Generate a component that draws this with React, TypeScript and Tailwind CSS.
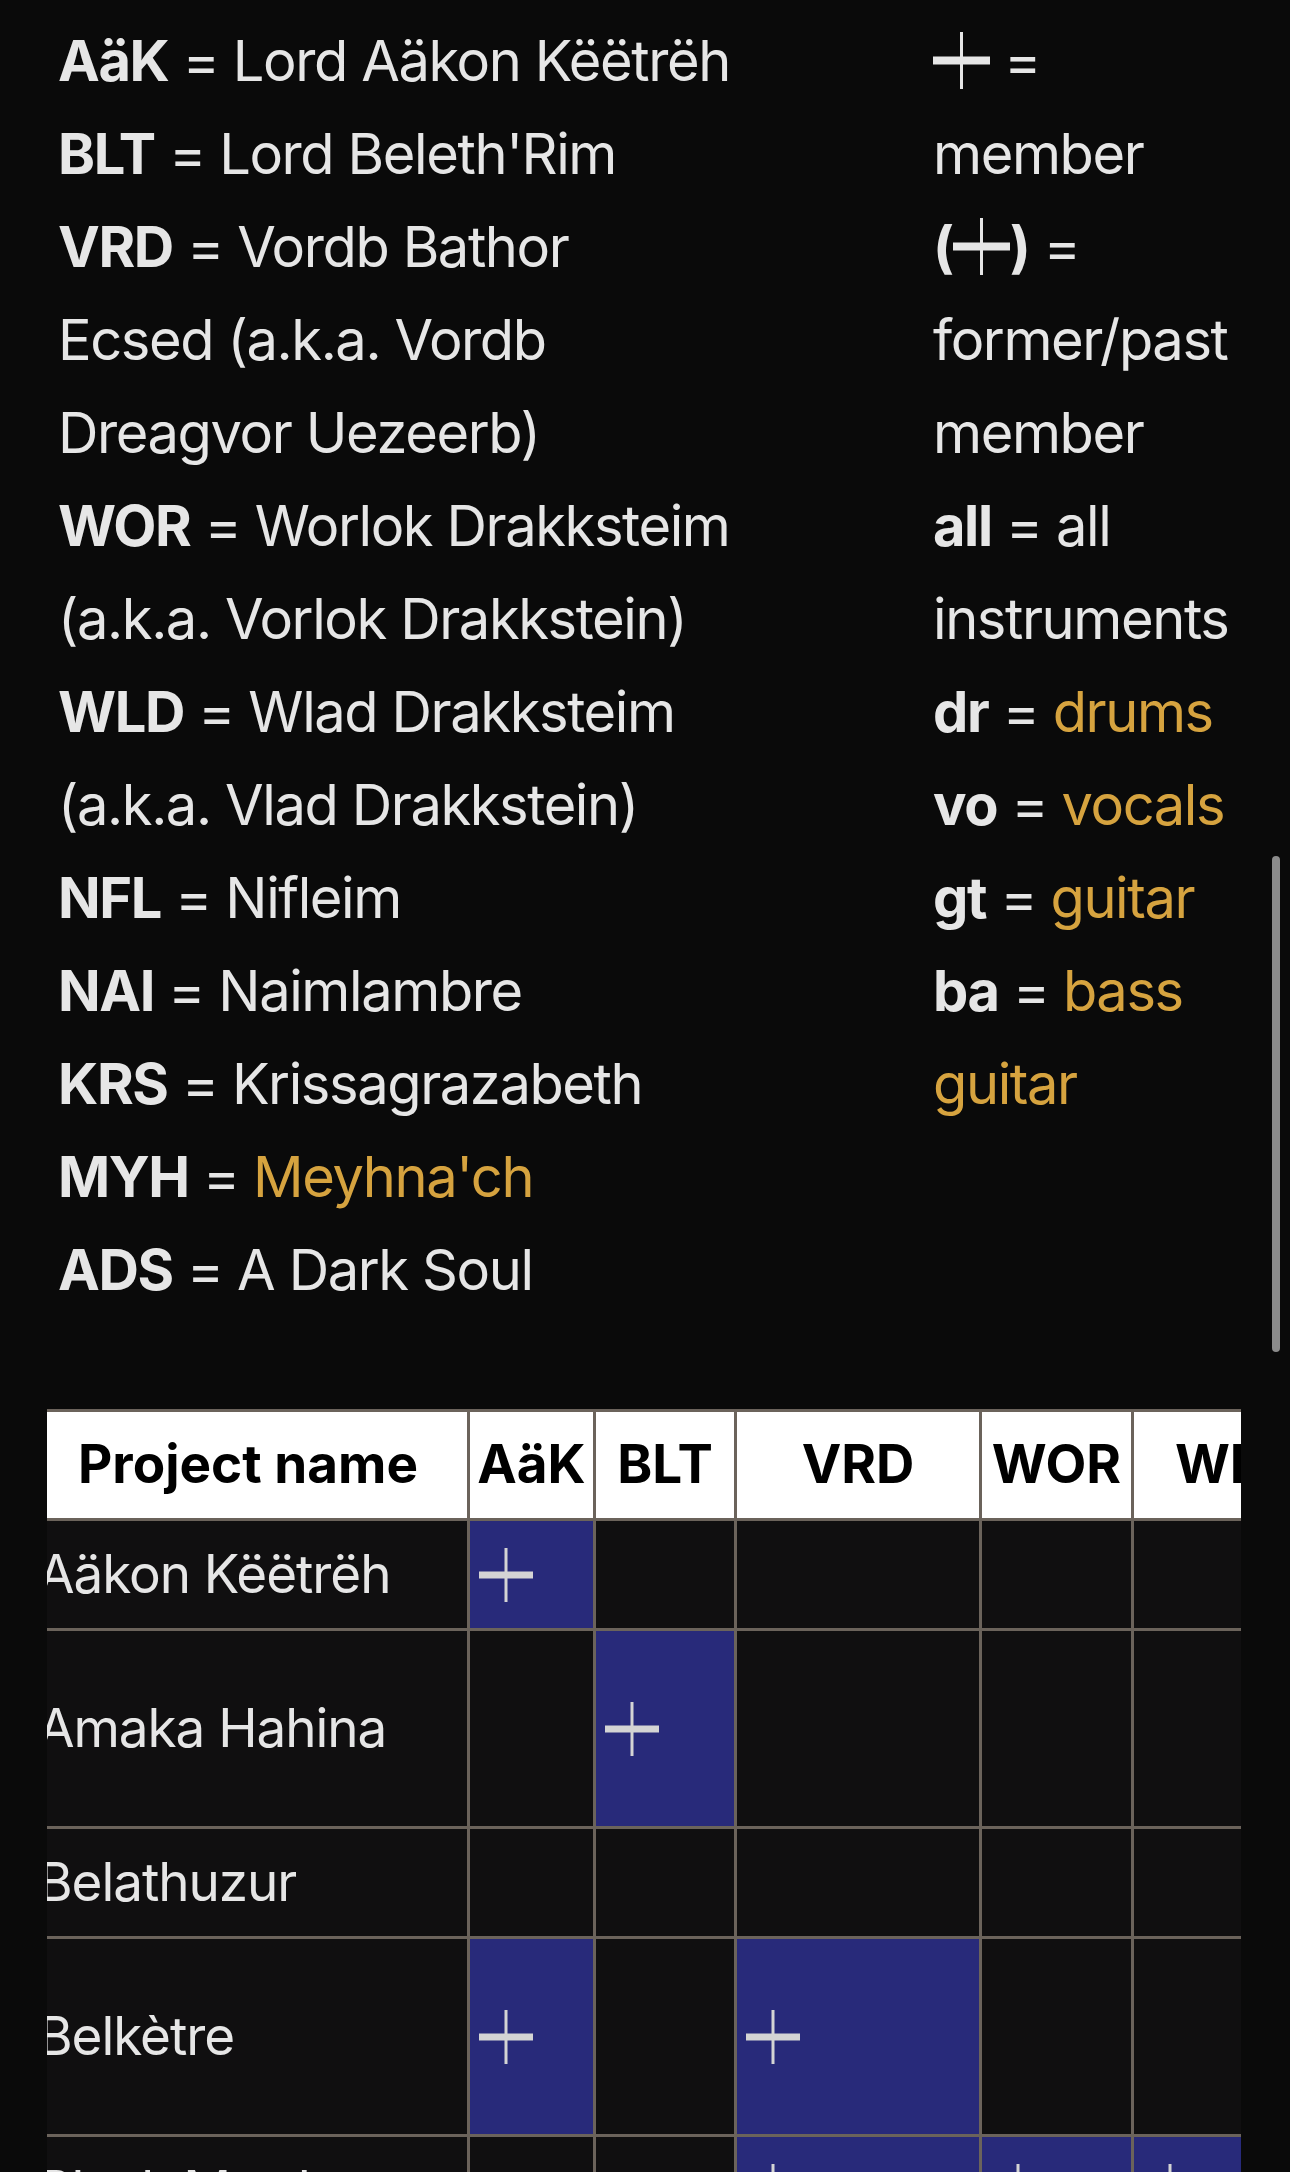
import type { ReactNode } from "react";

type Col = { key: string; label: string; width: string };

const columns: Col[] = [
  { key: "name", label: "Project name", width: "w-[438px]" },
  { key: "AäK", label: "AäK", width: "w-[123px]" },
  { key: "BLT", label: "BLT", width: "w-[138px]" },
  { key: "VRD", label: "VRD", width: "w-[242px]" },
  { key: "WOR", label: "WOR", width: "w-[149px]" },
  { key: "WLD", label: "WLD", width: "w-[205px]" },
  { key: "NFL", label: "NFL", width: "w-[140px]" },
  { key: "NAI", label: "NAI", width: "w-[140px]" },
  { key: "KRS", label: "KRS", width: "w-[140px]" },
  { key: "MYH", label: "MYH", width: "w-[150px]" },
  { key: "ADS", label: "ADS", width: "w-[140px]" },
];

type Project = { name: string; members: string[]; tall?: boolean };

const projects: Project[] = [
  { name: "Aäkon Këëtrëh", members: ["AäK"] },
  { name: "Amaka Hahina", members: ["BLT"], tall: true },
  { name: "Belathuzur", members: ["KRS"] },
  { name: "Belkètre", members: ["AäK", "VRD"], tall: true },
  { name: "Black Murder", members: ["VRD", "WOR", "WLD"] },
];

// thick horizontal, thin vertical cross (┿) used as the member mark
function Cross({
  size,
  bar,
  line,
  className = "",
}: {
  size: number;
  bar: number;
  line: number;
  className?: string;
}) {
  return (
    <svg
      width={size}
      height={size}
      viewBox={`0 0 ${size} ${size}`}
      role="img"
      aria-label="┿"
      className={`inline-block shrink-0 ${className}`}
    >
      <rect x={0} y={(size - bar) / 2} width={size} height={bar} fill="currentColor" />
      <rect x={(size - line) / 2} y={0} width={line} height={size} fill="currentColor" />
    </svg>
  );
}

function Gold({ children }: { children: ReactNode }) {
  return <span className="text-[#d6a33f]">{children}</span>;
}

function Line({ children }: { children: ReactNode }) {
  return <div className="whitespace-nowrap">{children}</div>;
}

function LegendMark() {
  return <Cross size={57} bar={8} line={3} className="align-[-8px]" />;
}

export default function App() {
  return (
    <div className="relative h-[2172px] w-[1290px] overflow-hidden bg-[#0a0a0a] font-['Inter','Liberation_Sans',sans-serif] text-[#e6e6e6]">
      {/* Legend */}
      <div className="flex pl-[58px] pt-[15px] text-[56px] leading-[93px] tracking-[-0.025em]">
        <div className="w-[875px]">
          <Line>
            <b className="font-bold">AäK</b> = Lord Aäkon Këëtrëh
          </Line>
          <Line>
            <b className="font-bold">BLT</b> = Lord Beleth'Rim
          </Line>
          <Line>
            <b className="font-bold">VRD</b> = Vordb Bathor
          </Line>
          <Line>Ecsed (a.k.a. Vordb</Line>
          <Line>Dreagvor Uezeerb)</Line>
          <Line>
            <b className="font-bold">WOR</b> = Worlok Drakksteim
          </Line>
          <Line>(a.k.a. Vorlok Drakkstein)</Line>
          <Line>
            <b className="font-bold">WLD</b> = Wlad Drakksteim
          </Line>
          <Line>(a.k.a. Vlad Drakkstein)</Line>
          <Line>
            <b className="font-bold">NFL</b> = Nifleim
          </Line>
          <Line>
            <b className="font-bold">NAI</b> = Naimlambre
          </Line>
          <Line>
            <b className="font-bold">KRS</b> = Krissagrazabeth
          </Line>
          <Line>
            <b className="font-bold">MYH</b> = <Gold>Meyhna'ch</Gold>
          </Line>
          <Line>
            <b className="font-bold">ADS</b> = A Dark Soul
          </Line>
        </div>
        <div className="flex-1">
          <Line>
            <LegendMark /> =
          </Line>
          <Line>member</Line>
          <Line>
            <b className="font-bold">(</b>
            <LegendMark />
            <b className="font-bold">)</b> =
          </Line>
          <Line>former/past</Line>
          <Line>member</Line>
          <Line>
            <b className="font-bold">all</b> = all
          </Line>
          <Line>instruments</Line>
          <Line>
            <b className="font-bold">dr</b> = <Gold>drums</Gold>
          </Line>
          <Line>
            <b className="font-bold">vo</b> = <Gold>vocals</Gold>
          </Line>
          <Line>
            <b className="font-bold">gt</b> = <Gold>guitar</Gold>
          </Line>
          <Line>
            <b className="font-bold">ba</b> = <Gold>bass</Gold>
          </Line>
          <Line>
            <Gold>guitar</Gold>
          </Line>
        </div>
      </div>

      {/* Membership table, scrolled a little to the right */}
      <div className="ml-[47px] mt-[92px] w-[1194px] overflow-hidden">
        <table className="-ml-[21px] w-[2041px] table-fixed border-separate border-spacing-[3px] bg-[#6b635b]">
          <colgroup>
            {columns.map((c) => (
              <col key={c.key} className={c.width} />
            ))}
          </colgroup>
          <thead>
            <tr className="h-[106px] bg-white">
              {columns.map((c) => (
                <th
                  key={c.key}
                  className="whitespace-nowrap p-0 text-center align-middle text-[53px] font-bold text-black"
                >
                  {c.label}
                </th>
              ))}
            </tr>
          </thead>
          <tbody>
            {projects.map((p) => (
              <tr key={p.name} className={p.tall ? "h-[195px]" : "h-[107px]"}>
                {columns.map((c) =>
                  c.key === "name" ? (
                    <td
                      key={c.key}
                      className="whitespace-nowrap bg-[#100f10] p-0 pl-[9px] align-middle text-[53px] tracking-[-0.02em] text-[#e6e6e6]"
                    >
                      {p.name}
                    </td>
                  ) : p.members.includes(c.key) ? (
                    <td key={c.key} className="bg-[#282a7a] p-0 pl-[9px] align-middle text-[#d4d4d4]">
                      <div className="flex items-center">
                        <Cross size={54} bar={7} line={3} />
                      </div>
                    </td>
                  ) : (
                    <td key={c.key} className="bg-[#100f10] p-0" />
                  )
                )}
              </tr>
            ))}
          </tbody>
        </table>
      </div>

      {/* overlay scroll indicator */}
      <div className="absolute left-[1272px] top-[856px] h-[496px] w-[8px] rounded-full bg-[#8b8b8b]" />
    </div>
  );
}
